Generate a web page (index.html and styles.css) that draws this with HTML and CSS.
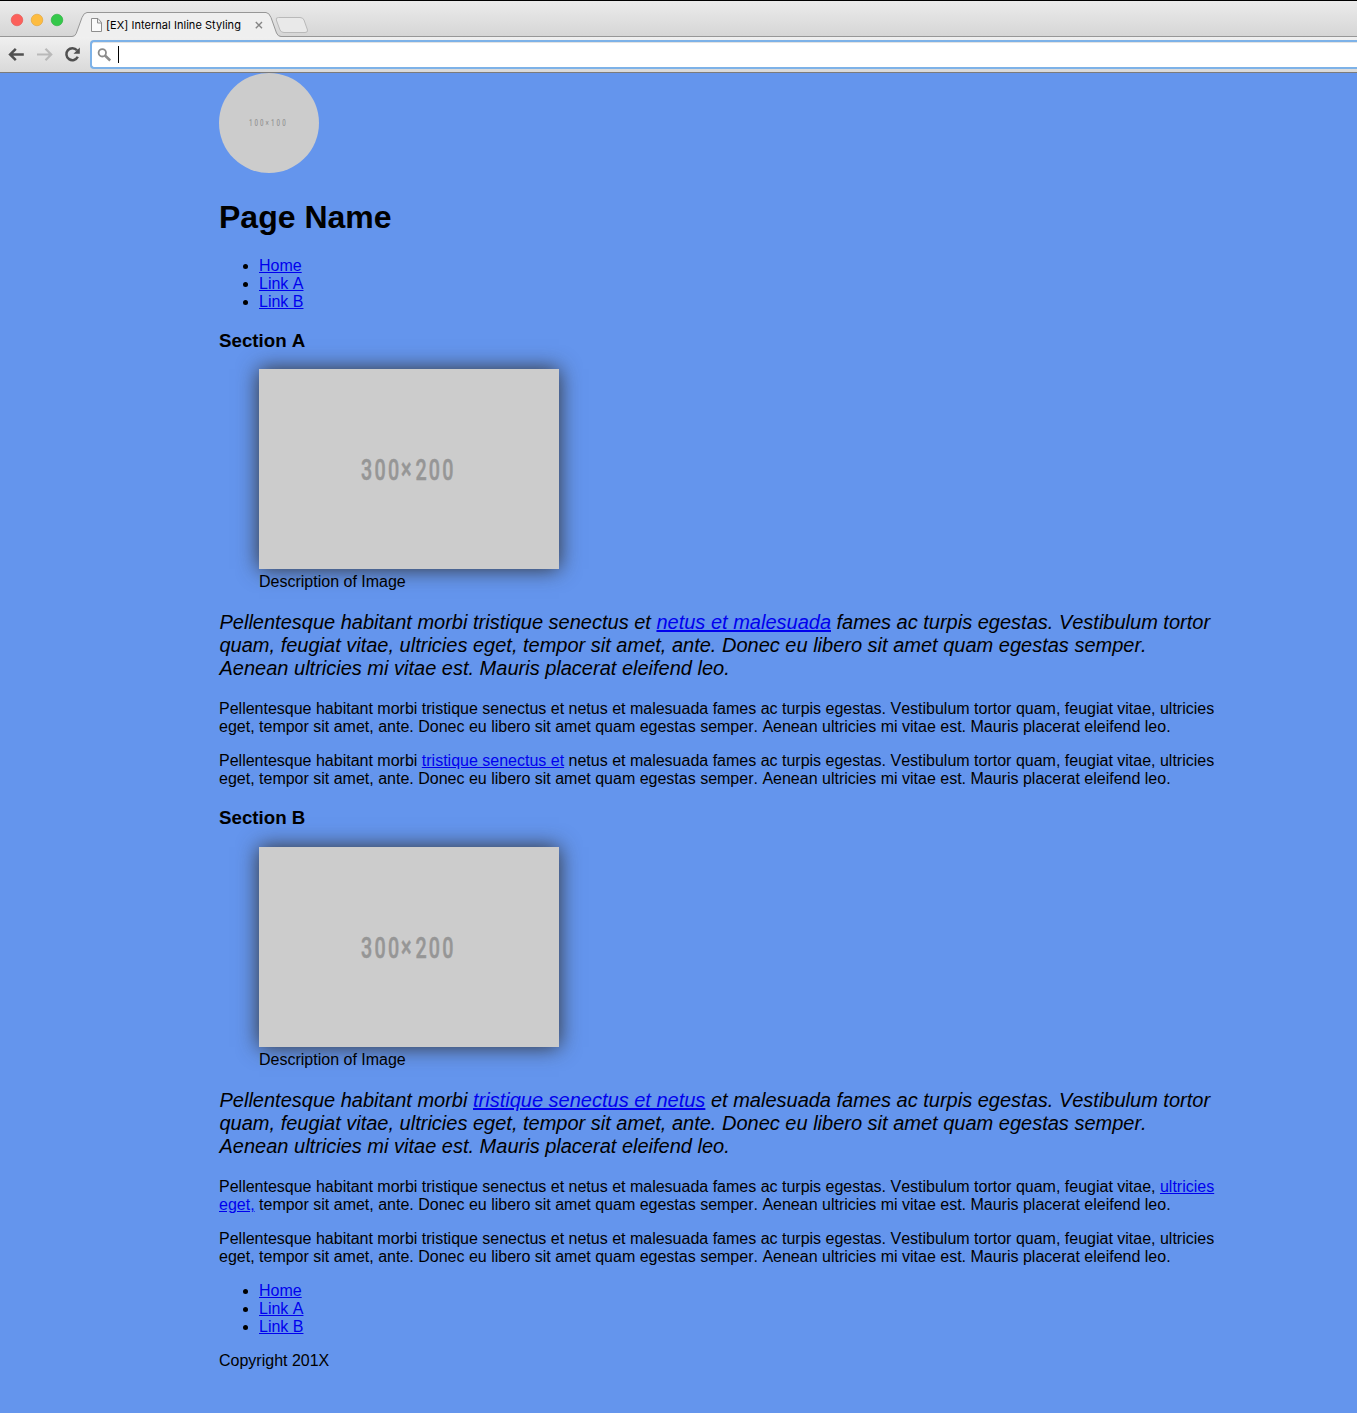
FILE: index.html
```html
<!DOCTYPE html>
<html lang="en">
<head>
<meta charset="utf-8">
<title>[EX] Internal Inline Styling</title>
<link rel="stylesheet" href="styles.css">
</head>
<body>
<header class="browser">
  <div class="tabstrip">
    <svg class="tabshape" width="330" height="37" viewBox="0 0 330 37">
      <path d="M0 37V36.5H72Q75 36.5 76.2 33.5L82 17.500Q84 12.500 87 12.500H266Q269 12.500 271 17.500L276.500 33Q278 36.500 281 36.500H330V37Z" fill="#efefef"/>
      <path d="M0 36.500H72Q75 36.500 76.200 33.500L82 17.500Q84 12.500 87 12.500H266Q269 12.500 271 17.500L276.500 33Q278 36.500 281 36.500H330" fill="none" stroke="#979797"/>
      <path d="M278.500 17.500H300Q303 17.500 304 20L307.500 30Q308 32.500 305 32.500H284Q281 32.500 280 30L276.300 20Q275.500 17.500 278.500 17.500Z" fill="#e9e9e9" stroke="#b9b9b9"/>
      <circle cx="17" cy="20" r="5.800" fill="#fc605b" stroke="#e2514c" stroke-width=".6"/>
      <circle cx="37" cy="20" r="5.800" fill="#fdbc40" stroke="#e0a133" stroke-width=".6"/>
      <circle cx="57" cy="20" r="5.800" fill="#34c84a" stroke="#25ac38" stroke-width=".6"/>
      <path d="M91.500 18.500H98L101.500 22.500V31.500H91.500ZM97.500 18.500V23H101.500" fill="#fafafa" stroke="#8e8e8e"/>
      <path d="M255.800 22L262 28.200M262 22L255.800 28.200" stroke="#858585" stroke-width="1.400"/>
    </svg>
    <span class="tabtitle">[EX] Internal Inline Styling</span>
  </div>
  <div class="toolbar">
    <svg class="controls" width="90" height="35" viewBox="0 37 90 35" fill="none">
      <path d="M23.800 54.500H11M15.800 48.800L10.100 54.500L15.800 60.200" stroke="#505050" stroke-width="2.500"/>
      <path d="M37 54.500H50.500M45.500 48.800L51.200 54.500L45.500 60.200" stroke="#b9b9b9" stroke-width="2.200"/>
      <path d="M77 50.300A6 6 0 1 0 77.800 56.800" stroke="#505050" stroke-width="2.500"/>
      <path d="M79.800 47.500V53.800H73.500Z" fill="#505050"/>
    </svg>
    <div class="address">
      <svg width="40" height="24" viewBox="92 42 40 24" fill="none">
        <circle cx="102.300" cy="52.800" r="3.700" stroke="#8b8b8b" stroke-width="1.800"/>
        <path d="M105 55.500L110.200 60.500" stroke="#8b8b8b" stroke-width="2.500"/>
        <path d="M118.500 46V63" stroke="#000"/>
      </svg>
    </div>
  </div>
</header>
<main class="page">
  <svg class="avatar" width="100" height="100" viewBox="0 0 100 100">
    <circle cx="50" cy="50" r="50" fill="#ccc"/>
    <text class="size" transform="translate(30 53) scale(.65 1)" font-size="9.500" x="0 8.500 17 25.500 34 42.500 51" y="0">100×100</text>
  </svg>
  <h1>Page Name</h1>
  <ul class="nav">
    <li><a href="#">Home</a></li>
    <li><a href="#">Link A</a></li>
    <li><a href="#">Link B</a></li>
  </ul>
  <section>
    <h3>Section A</h3>
    <figure>
      <svg class="picture" width="300" height="200" viewBox="0 0 300 200">
        <text class="size" transform="translate(102 111) scale(.68 1)" font-size="29" x="0 20 39.700 59 80 99.500 119.500" y="0 0 0 -1 0 0 0">300×200</text>
      </svg>
      <figcaption>Description of Image</figcaption>
    </figure>
    <p class="intro">Pellentesque habitant morbi tristique senectus et <a href="#">netus et malesuada</a> fames ac turpis egestas. Vestibulum tortor<br>quam, feugiat vitae, ultricies eget, tempor sit amet, ante. Donec eu libero sit amet quam egestas semper.<br>Aenean ultricies mi vitae est. Mauris placerat eleifend leo.</p>
    <p>Pellentesque habitant morbi tristique senectus et netus et malesuada fames ac turpis egestas. Vestibulum tortor quam, feugiat vitae, ultricies<br>eget, tempor sit amet, ante. Donec eu libero sit amet quam egestas semper. Aenean ultricies mi vitae est. Mauris placerat eleifend leo.</p>
    <p>Pellentesque habitant morbi <a href="#">tristique senectus et</a> netus et malesuada fames ac turpis egestas. Vestibulum tortor quam, feugiat vitae, ultricies<br>eget, tempor sit amet, ante. Donec eu libero sit amet quam egestas semper. Aenean ultricies mi vitae est. Mauris placerat eleifend leo.</p>
  </section>
  <section class="second">
    <h3>Section B</h3>
    <figure>
      <svg class="picture" width="300" height="200" viewBox="0 0 300 200">
        <text class="size" transform="translate(102 111) scale(.68 1)" font-size="29" x="0 20 39.700 59 80 99.500 119.500" y="0 0 0 -1 0 0 0">300×200</text>
      </svg>
      <figcaption>Description of Image</figcaption>
    </figure>
    <p class="intro">Pellentesque habitant morbi <a href="#">tristique senectus et netus</a> et malesuada fames ac turpis egestas. Vestibulum tortor<br>quam, feugiat vitae, ultricies eget, tempor sit amet, ante. Donec eu libero sit amet quam egestas semper.<br>Aenean ultricies mi vitae est. Mauris placerat eleifend leo.</p>
    <p>Pellentesque habitant morbi tristique senectus et netus et malesuada fames ac turpis egestas. Vestibulum tortor quam, feugiat vitae, <a href="#">ultricies<br>eget,</a> tempor sit amet, ante. Donec eu libero sit amet quam egestas semper. Aenean ultricies mi vitae est. Mauris placerat eleifend leo.</p>
    <p>Pellentesque habitant morbi tristique senectus et netus et malesuada fames ac turpis egestas. Vestibulum tortor quam, feugiat vitae, ultricies<br>eget, tempor sit amet, ante. Donec eu libero sit amet quam egestas semper. Aenean ultricies mi vitae est. Mauris placerat eleifend leo.</p>
  </section>
  <ul class="nav">
    <li><a href="#">Home</a></li>
    <li><a href="#">Link A</a></li>
    <li><a href="#">Link B</a></li>
  </ul>
  <p>Copyright 201X</p>
</main>
</body>
</html>
```
FILE: styles.css
```css
body {
  margin: 0;
  min-height: 1413px;
  background: #6495ed;
  color: #000;
  font: 16px/18px "Liberation Sans", Arial, sans-serif;
  font-kerning: none;
  overflow-x: hidden;
}
.browser { height: 73px; }
.tabstrip {
  display: flex;
  box-sizing: border-box;
  height: 37px;
  border-top: 1px solid #000;
  background: linear-gradient(#ebebeb, #d6d6d6 35px, #979797 35px);
}
.tabshape { flex: none; margin-top: -1px; }
.tabtitle {
  margin-left: -224px;
  padding-top: 15px;
  font: 11px/18px Inter, sans-serif;
  letter-spacing: .04px;
  white-space: nowrap;
  z-index: 1;
}
.toolbar {
  display: flex;
  box-sizing: border-box;
  height: 36px;
  border-bottom: 1px solid #7b7b7b;
  background: linear-gradient(#f0f0f0, #d9d9d9);
}
.controls { flex: none; }
.address {
  flex: 1;
  height: 25px;
  margin-top: 3px;
  border: 2px solid #7db2e8;
  border-right: 0;
  border-radius: 4px 0 0 4px;
  background: #fff;
  box-shadow: inset 0 1px #e3e3e3;
}
.address svg { display: block; }
.page { width: 1000px; margin-left: 219px; white-space: nowrap; }
.avatar, .picture { display: block; }
.size { font-family: Roboto, sans-serif; font-weight: 500; fill: #969696; }
.picture .size { stroke: #969696; stroke-width: .5px; }
h1 { margin: 26px 0 21px; font-size: 32px; line-height: 37px; }
.nav { margin: 0; padding-left: 40px; }
h3 { margin: 19px 0 17px; font-size: 18.72px; line-height: 22px; }
.second h3 { margin: 19px 0 18px; }
figure { margin: 0 40px; }
.picture { background: #ccc; box-shadow: 0 0 20px #333; }
figcaption { padding-top: 4px; }
p { margin: 16px 0; }
.intro { margin: 20px 0; padding-left: .5px; font-size: 20px; line-height: 23px; font-style: italic; }
a { color: #0000ee; text-decoration: underline; }
```
